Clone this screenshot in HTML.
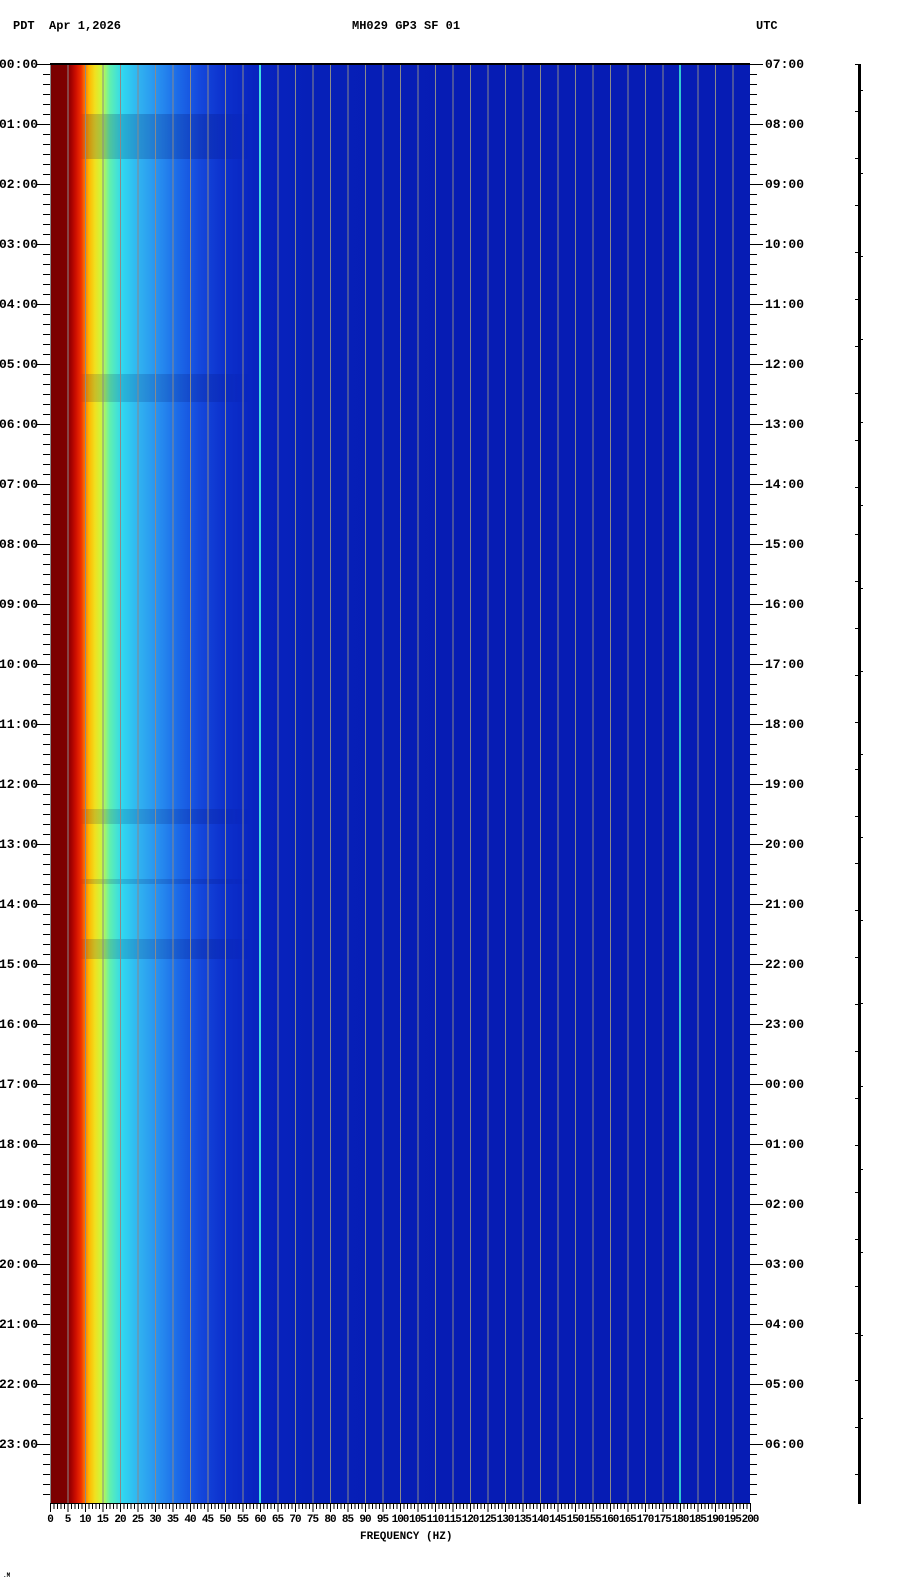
<!DOCTYPE html>
<html><head><meta charset="utf-8"><style>
body{margin:0;width:902px;height:1584px;background:#fff;position:relative;overflow:hidden;font-family:"Liberation Mono",monospace;font-weight:bold;color:#000}
.a{position:absolute}
.t{position:absolute;font-size:12px;line-height:12px;white-space:nowrap}
#spec{left:50px;top:64px;width:700px;height:1439px;background:linear-gradient(90deg,#7a0000 0,#7e0000 17px,#a00000 21px,#d01000 26px,#f03000 31px,#ff7800 35px,#ffb800 39px,#f0e020 45px,#c8f840 52px,#60f0b0 60px,#30d8f0 72px,#30b0f0 90px,#2890f0 108px,#1c6ae8 128px,#1448dc 150px,#0c30cc 175px,#0824c0 205px,#0620b8 260px,#061cb4 400px,#061cb4 700px)}
#grid{left:50px;top:64px;width:700px;height:1439px;background:repeating-linear-gradient(90deg,#8a8a8a 0 1px,transparent 1px 17.5px)}
.lt{position:absolute;font-size:13px;line-height:13px}
.ft{position:absolute;top:1515px;font-size:11px;line-height:11px;transform:translateX(-50%);letter-spacing:-1px}
</style></head><body>
<div class="t" style="left:13px;top:20px">PDT</div>
<div class="t" style="left:49px;top:20px">Apr 1,2026</div>
<div class="t" style="left:352px;top:20px">MH029 GP3 SF 01</div>
<div class="t" style="left:756px;top:20px">UTC</div>
<div class="a" id="spec"></div>
<div class="a" style="left:50px;top:64px;width:700px;height:1439px;background:linear-gradient(180deg,transparent 0 50px,rgba(0,0,80,.18) 50px 95px,transparent 95px 310px,rgba(0,0,80,.15) 310px 338px,transparent 338px 745px,rgba(0,0,80,.15) 745px 760px,transparent 760px 815px,rgba(0,0,80,.15) 815px 820px,transparent 820px 875px,rgba(0,0,80,.16) 875px 895px,transparent 895px);-webkit-mask:linear-gradient(90deg,transparent 0 30px,#000 38px,#000 160px,transparent 200px);mask:linear-gradient(90deg,transparent 0 30px,#000 38px,#000 160px,transparent 200px)"></div>
<div class="a" id="grid"></div>
<div class="a" style="left:259px;top:64px;width:2px;height:1439px;background:#40e0e0"></div>
<div class="a" style="left:679px;top:64px;width:2px;height:1439px;background:#30c8d0"></div>
<div class="a" style="left:50px;top:63px;width:700px;height:2px;background:#000"></div>
<div class="a" style="left:43px;top:64px;width:7px;height:1440px;background:repeating-linear-gradient(180deg,#000 0 1px,transparent 1px 10px)"></div>
<div class="a" style="left:37px;top:64px;width:13px;height:1440px;background:repeating-linear-gradient(180deg,#000 0 1px,transparent 1px 60px)"></div>
<div class="a" style="left:750px;top:64px;width:7px;height:1440px;background:repeating-linear-gradient(180deg,#000 0 1px,transparent 1px 10px)"></div>
<div class="a" style="left:750px;top:64px;width:13px;height:1440px;background:repeating-linear-gradient(180deg,#000 0 1px,transparent 1px 60px)"></div>
<div class="a" style="left:50px;top:1503px;width:701px;height:1px;background:#000"></div>
<div class="a" style="left:50px;top:1503px;width:701px;height:6px;background:repeating-linear-gradient(90deg,#000 0 1px,transparent 1px 3.5px)"></div>
<div class="a" style="left:50px;top:1503px;width:701px;height:9px;background:repeating-linear-gradient(90deg,#000 0 1px,transparent 1px 17.5px)"></div>
<div class="a" style="left:858px;top:64px;width:3px;height:1440px;background:#000"></div>
<div class="a" style="left:855px;top:64px;width:3px;height:1440px;background:repeating-linear-gradient(180deg,#000 0 1px,transparent 1px 47px)"></div>
<div class="a" style="left:861px;top:90px;width:2px;height:1400px;background:repeating-linear-gradient(180deg,#000 0 1px,transparent 1px 83px)"></div>

<div class="lt" style="left:-1px;top:58px">00:00</div>
<div class="lt" style="left:-1px;top:118px">01:00</div>
<div class="lt" style="left:-1px;top:178px">02:00</div>
<div class="lt" style="left:-1px;top:238px">03:00</div>
<div class="lt" style="left:-1px;top:298px">04:00</div>
<div class="lt" style="left:-1px;top:358px">05:00</div>
<div class="lt" style="left:-1px;top:418px">06:00</div>
<div class="lt" style="left:-1px;top:478px">07:00</div>
<div class="lt" style="left:-1px;top:538px">08:00</div>
<div class="lt" style="left:-1px;top:598px">09:00</div>
<div class="lt" style="left:-1px;top:658px">10:00</div>
<div class="lt" style="left:-1px;top:718px">11:00</div>
<div class="lt" style="left:-1px;top:778px">12:00</div>
<div class="lt" style="left:-1px;top:838px">13:00</div>
<div class="lt" style="left:-1px;top:898px">14:00</div>
<div class="lt" style="left:-1px;top:958px">15:00</div>
<div class="lt" style="left:-1px;top:1018px">16:00</div>
<div class="lt" style="left:-1px;top:1078px">17:00</div>
<div class="lt" style="left:-1px;top:1138px">18:00</div>
<div class="lt" style="left:-1px;top:1198px">19:00</div>
<div class="lt" style="left:-1px;top:1258px">20:00</div>
<div class="lt" style="left:-1px;top:1318px">21:00</div>
<div class="lt" style="left:-1px;top:1378px">22:00</div>
<div class="lt" style="left:-1px;top:1438px">23:00</div>

<div class="lt" style="left:765px;top:58px">07:00</div>
<div class="lt" style="left:765px;top:118px">08:00</div>
<div class="lt" style="left:765px;top:178px">09:00</div>
<div class="lt" style="left:765px;top:238px">10:00</div>
<div class="lt" style="left:765px;top:298px">11:00</div>
<div class="lt" style="left:765px;top:358px">12:00</div>
<div class="lt" style="left:765px;top:418px">13:00</div>
<div class="lt" style="left:765px;top:478px">14:00</div>
<div class="lt" style="left:765px;top:538px">15:00</div>
<div class="lt" style="left:765px;top:598px">16:00</div>
<div class="lt" style="left:765px;top:658px">17:00</div>
<div class="lt" style="left:765px;top:718px">18:00</div>
<div class="lt" style="left:765px;top:778px">19:00</div>
<div class="lt" style="left:765px;top:838px">20:00</div>
<div class="lt" style="left:765px;top:898px">21:00</div>
<div class="lt" style="left:765px;top:958px">22:00</div>
<div class="lt" style="left:765px;top:1018px">23:00</div>
<div class="lt" style="left:765px;top:1078px">00:00</div>
<div class="lt" style="left:765px;top:1138px">01:00</div>
<div class="lt" style="left:765px;top:1198px">02:00</div>
<div class="lt" style="left:765px;top:1258px">03:00</div>
<div class="lt" style="left:765px;top:1318px">04:00</div>
<div class="lt" style="left:765px;top:1378px">05:00</div>
<div class="lt" style="left:765px;top:1438px">06:00</div>

<div class="ft" style="left:50px">0</div>
<div class="ft" style="left:67.5px">5</div>
<div class="ft" style="left:85px">10</div>
<div class="ft" style="left:102.5px">15</div>
<div class="ft" style="left:120px">20</div>
<div class="ft" style="left:137.5px">25</div>
<div class="ft" style="left:155px">30</div>
<div class="ft" style="left:172.5px">35</div>
<div class="ft" style="left:190px">40</div>
<div class="ft" style="left:207.5px">45</div>
<div class="ft" style="left:225px">50</div>
<div class="ft" style="left:242.5px">55</div>
<div class="ft" style="left:260px">60</div>
<div class="ft" style="left:277.5px">65</div>
<div class="ft" style="left:295px">70</div>
<div class="ft" style="left:312.5px">75</div>
<div class="ft" style="left:330px">80</div>
<div class="ft" style="left:347.5px">85</div>
<div class="ft" style="left:365px">90</div>
<div class="ft" style="left:382.5px">95</div>
<div class="ft" style="left:400px">100</div>
<div class="ft" style="left:417.5px">105</div>
<div class="ft" style="left:435px">110</div>
<div class="ft" style="left:452.5px">115</div>
<div class="ft" style="left:470px">120</div>
<div class="ft" style="left:487.5px">125</div>
<div class="ft" style="left:505px">130</div>
<div class="ft" style="left:522.5px">135</div>
<div class="ft" style="left:540px">140</div>
<div class="ft" style="left:557.5px">145</div>
<div class="ft" style="left:575px">150</div>
<div class="ft" style="left:592.5px">155</div>
<div class="ft" style="left:610px">160</div>
<div class="ft" style="left:627.5px">165</div>
<div class="ft" style="left:645px">170</div>
<div class="ft" style="left:662.5px">175</div>
<div class="ft" style="left:680px">180</div>
<div class="ft" style="left:697.5px">185</div>
<div class="ft" style="left:715px">190</div>
<div class="ft" style="left:732.5px">195</div>
<div class="ft" style="left:750px">200</div>
<div class="t" style="left:360px;top:1531px;font-size:11px">FREQUENCY (HZ)</div>
<div class="t" style="left:3px;top:1570px;font-size:6px">.M</div>
</body></html>
